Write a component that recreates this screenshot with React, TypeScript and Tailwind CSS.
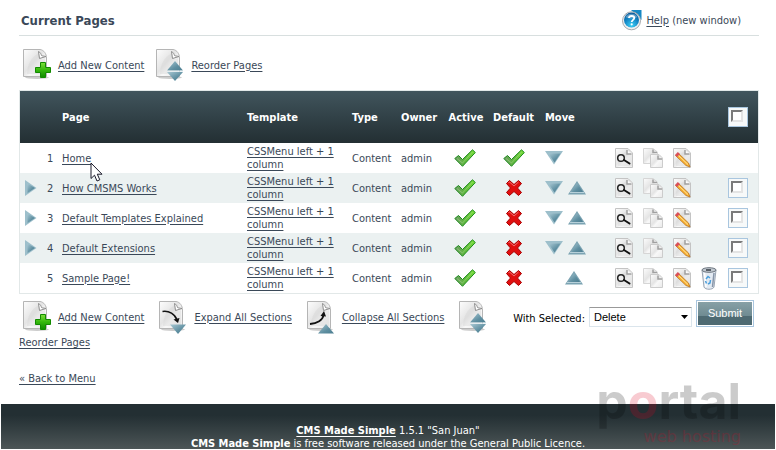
import type { ReactNode } from 'react'

interface PageRow {
  id: number
  title: string
  expandable: boolean
  isDefault: boolean
  canMoveDown: boolean
  canMoveUp: boolean
  canDelete: boolean
  selectable: boolean
}

const pages: PageRow[] = [
  { id: 1, title: 'Home', expandable: false, isDefault: true, canMoveDown: true, canMoveUp: false, canDelete: false, selectable: false },
  { id: 2, title: 'How CMSMS Works', expandable: true, isDefault: false, canMoveDown: true, canMoveUp: true, canDelete: false, selectable: true },
  { id: 3, title: 'Default Templates Explained', expandable: true, isDefault: false, canMoveDown: true, canMoveUp: true, canDelete: false, selectable: true },
  { id: 4, title: 'Default Extensions', expandable: true, isDefault: false, canMoveDown: true, canMoveUp: true, canDelete: false, selectable: true },
  { id: 5, title: 'Sample Page!', expandable: false, isDefault: false, canMoveDown: false, canMoveUp: true, canDelete: true, selectable: true },
]

// Gradients shared by all the icons
function IconDefs() {
  return (
    <svg width="0" height="0" className="absolute" aria-hidden="true">
      <defs>
        <linearGradient id="paper" x1="0" y1="0" x2="1" y2="1">
          <stop offset="0" stopColor="#fdfdfd" />
          <stop offset="0.45" stopColor="#e4e4e4" />
          <stop offset="0.6" stopColor="#f8f8f8" />
          <stop offset="1" stopColor="#e9e9e9" />
        </linearGradient>
        <linearGradient id="plus" x1="0" y1="0" x2="0" y2="1">
          <stop offset="0" stopColor="#7fe03c" />
          <stop offset="0.5" stopColor="#35b80c" />
          <stop offset="1" stopColor="#0f8a00" />
        </linearGradient>
        <linearGradient id="steel" x1="0" y1="0" x2="1" y2="1">
          <stop offset="0" stopColor="#a9c8d3" />
          <stop offset="0.6" stopColor="#5f8fa1" />
          <stop offset="1" stopColor="#4b7d90" />
        </linearGradient>
        <linearGradient id="tick" x1="0" y1="0" x2="1" y2="0">
          <stop offset="0" stopColor="#6f9a68" />
          <stop offset="0.5" stopColor="#5fb83c" />
          <stop offset="1" stopColor="#7be03a" />
        </linearGradient>
        <radialGradient id="globe" cx="0.5" cy="0.85" r="0.8">
          <stop offset="0" stopColor="#3fd0f5" />
          <stop offset="0.6" stopColor="#1184c4" />
          <stop offset="1" stopColor="#0b5c9c" />
        </radialGradient>
      </defs>
    </svg>
  )
}

function Sheet({ children }: { children?: ReactNode }) {
  return (
    <svg width="30" height="34" viewBox="0 0 30 34" className="shrink-0" aria-hidden="true">
      <ellipse cx="14" cy="29.500" rx="12" ry="1.500" fill="#000" opacity="0.2" />
      <path d="M0.500 1.500H17C21 2 23.500 6 23.500 10V28.500H0.500Z" fill="url(#paper)" stroke="#b5b5b5" />
      <path d="M4 26C4 17 8 9 16 5L18 11L22 10V26Z" fill="#d5d5d5" opacity="0.4" />
      <path d="M15.500 3.500L16.500 10.500L23 8.500C21 8 19 8 18.500 7.500C18 6 17.500 4.500 15.500 3.500Z" fill="#fff" stroke="#8d8d8d" />
      {children}
    </svg>
  )
}

function AddIcon() {
  return (
    <Sheet>
      <path d="M17.500 14.500H22.500V19.500H27.500V24.500H22.500V29.500H17.500V24.500H12.500V19.500H17.500Z" fill="url(#plus)" stroke="#128a00" />
    </Sheet>
  )
}

function ReorderIcon() {
  return (
    <Sheet>
      <path d="M19 13L27 22.500H11Z" fill="url(#steel)" />
      <path d="M11 24H27L19 33Z" fill="url(#steel)" />
      <path d="M11 23.200H27" stroke="#e5f0f4" />
    </Sheet>
  )
}

function ExpandIcon() {
  return (
    <Sheet>
      <path d="M3.500 11.500C10 10.500 16 14 18 20" fill="none" stroke="#111" strokeWidth="1.500" />
      <path d="M14.500 19.500L19 23L20.500 18Z" fill="#111" />
      <path d="M11 24.500H27L19 34Z" fill="url(#steel)" />
    </Sheet>
  )
}

function CollapseIcon() {
  return (
    <Sheet>
      <path d="M3 24C10 23.500 16 20 16.500 15" fill="none" stroke="#111" strokeWidth="1.800" />
      <path d="M13.500 16L17 11L19 16.500Z" fill="#111" />
      <path d="M19 24L27 33.500H11Z" fill="url(#steel)" />
    </Sheet>
  )
}

function HelpIcon() {
  return (
    <svg width="20" height="22" viewBox="0 0 20 22" aria-hidden="true">
      <path d="M9 1H19.500V11Z" fill="#1688c4" />
      <circle cx="9.500" cy="11.800" r="9" fill="#eef0f2" stroke="#a4a8ac" />
      <circle cx="9.500" cy="11" r="7.500" fill="url(#globe)" />
      <path d="M3.500 8C5 3.500 14 3.500 15.500 8C12 10 7 10 3.500 8Z" fill="#fff" opacity="0.3" />
      <path d="M7 9C7 6.300 12.300 6.300 12.300 9C12.300 10.800 9.700 11 9.700 13" fill="none" stroke="#fff" strokeWidth="1.800" />
      <circle cx="9.700" cy="15.300" r="1.100" fill="#fff" />
    </svg>
  )
}

function CheckIcon() {
  return (
    <svg width="22" height="18" viewBox="0 0 22 18" aria-hidden="true">
      <path d="M0.800 9.500L4.500 6.500L8.500 10.500L18.500 0.800L21.300 3.500L8.500 17.300Z" fill="url(#tick)" stroke="#1c8a1c" strokeLinejoin="round" />
      <path d="M3 9.500L8.500 14L18.500 3" fill="none" stroke="#b6e6a0" strokeWidth="0.700" opacity="0.600" />
    </svg>
  )
}

function CrossIcon() {
  return (
    <svg width="16" height="16" viewBox="0 0 16 16" aria-hidden="true">
      <path d="M3.500 0.500L8 4.500L12.500 0.500L15.500 3.500L11.500 8L15.500 12.500L12.500 15.500L8 11.500L3.500 15.500L0.500 12.500L4.500 8L0.500 3.500Z" fill="#e01010" stroke="#a80000" strokeLinejoin="round" />
      <path d="M2.500 3L3.500 2L8 6L12.500 2" fill="none" stroke="#f47070" />
    </svg>
  )
}

function DownIcon() {
  return (
    <svg width="18" height="14" viewBox="0 0 18 14" aria-hidden="true">
      <path d="M0 0H18L9 13.500Z" fill="#9dbfcb" />
      <path d="M3.500 2.500H15.500L9.500 11.500Z" fill="url(#steel)" />
    </svg>
  )
}

function UpIcon() {
  return (
    <svg width="18" height="14" viewBox="0 0 18 14" aria-hidden="true">
      <path d="M9 0L18 13.500H0Z" fill="#7ba3b2" />
      <path d="M9 2L15 11H3.500Z" fill="url(#steel)" />
      <path d="M2 11.500H16" stroke="#b8d1da" />
    </svg>
  )
}

function RightIcon() {
  return (
    <svg width="12" height="16" viewBox="0 0 12 16" aria-hidden="true">
      <path d="M0 0L11.500 8L0 16Z" fill="#9dbfcb" />
      <path d="M2.500 3.500L10 8L2.500 13Z" fill="url(#steel)" />
    </svg>
  )
}

function SmallSheet() {
  return (
    <>
      <path d="M0.500 0.500H13L17.500 5V19.500H0.500Z" fill="url(#paper)" stroke="#c4c4c4" />
      <path d="M3 15C4 9 7 5 12 3L17 6V18H3Z" fill="#ccc" opacity="0.3" />
      <path d="M12 2V6H16.500" fill="#fff" stroke="#a0a0a0" strokeWidth="1.500" />
    </>
  )
}

function ViewIcon() {
  return (
    <svg width="18" height="20" viewBox="0 0 18 20" aria-hidden="true">
      <SmallSheet />
      <circle cx="6" cy="10" r="3.300" fill="#eee" stroke="#222" strokeWidth="1.500" />
      <path d="M9 12L14.500 15.500" stroke="#111" strokeWidth="2" strokeLinecap="round" />
    </svg>
  )
}

function CopyIcon() {
  return (
    <svg width="20" height="20" viewBox="0 0 20 20" aria-hidden="true">
      <path d="M0.500 0.500H10L14.500 4V15.500H0.500Z" fill="url(#paper)" stroke="#d6d6d6" />
      <path d="M10 1.500V4.500H14" fill="none" stroke="#a0a0a0" strokeWidth="1.500" />
      <path d="M7.500 6.500H16L19.500 10V19.500H7.500Z" fill="url(#paper)" stroke="#ccc" />
      <path d="M15 7.500V11H19" fill="none" stroke="#a0a0a0" strokeWidth="1.500" />
    </svg>
  )
}

function EditIcon() {
  return (
    <svg width="18" height="20" viewBox="0 0 18 20" aria-hidden="true">
      <SmallSheet />
      <path d="M5 5L15.500 15L17 19L13 17.500L2.500 7.500Z" fill="#f9b233" stroke="#b8701a" strokeWidth="0.800" />
      <path d="M4.500 6.500L15 16.500" stroke="#ffe39a" />
      <path d="M2 7L4.800 4L7 6L4 9Z" fill="#d9505a" />
    </svg>
  )
}

function TrashIcon() {
  return (
    <svg width="16" height="23" viewBox="0 0 16 23" aria-hidden="true">
      <path d="M1 3L3 20C4 23 12 23 13 20L15 3Z" fill="#e3eaf2" stroke="#9aa5b3" />
      <path d="M3.500 6L5 20" stroke="#fff" strokeWidth="1.500" />
      <path d="M13 6L11.500 20" stroke="#8795a8" strokeWidth="1.500" />
      <ellipse cx="8" cy="3" rx="7" ry="2.300" fill="#c3cad1" stroke="#6a737d" />
      <path d="M5 3H10" stroke="#343b43" strokeWidth="1.500" />
      <path d="M5 12L7 9.500L9 11M9.500 13L9 16L7 17M4.500 14L5.500 16.500" fill="none" stroke="#4a9fdc" strokeWidth="1.500" />
    </svg>
  )
}

function Cursor() {
  return (
    <svg width="14" height="21" viewBox="0 0 14 21" className="absolute top-[10px] left-[28px] z-10" aria-hidden="true">
      <path d="M1 1V16.500L4.500 13.200L7 19L9.800 17.800L7.300 12.200H12Z" fill="#fff" stroke="#1a1a2a" />
    </svg>
  )
}

function SelectBox({ label }: { label: string }) {
  return (
    <label className="block size-5 border border-[#a9c6df] bg-[#f7f9f9] p-[2px]">
      <input
        type="checkbox"
        aria-label={label}
        className="block size-3 appearance-none border-2 border-t-[#7a7a7a] border-r-[#e4e4e4] border-b-[#e4e4e4] border-l-[#7a7a7a] bg-white checked:bg-[#52707a]"
      />
    </label>
  )
}

function IconButton({ label, children }: { label: string; children: ReactNode }) {
  return (
    <button type="button" aria-label={label} className="block">
      {children}
    </button>
  )
}

function IconLink({ icon, children }: { icon: ReactNode; children: ReactNode }) {
  return (
    <a href="#" className="flex items-center gap-[5px]">
      {icon}
      <span className="underline underline-offset-2">{children}</span>
    </a>
  )
}

export default function App() {
  return (
    <div className="bg-white font-['DejaVu_Sans_Condensed','Noto_Sans',sans-serif] text-[11px] leading-[13px] text-[#3a4858]">
      <IconDefs />

      <main className="pr-[17px] pl-[19px]">
        {/* Heading */}
        <header className="flex h-9 items-end justify-between border-b border-[#d8dfdf] pr-[18px] pb-1">
          <h1 className="pb-[2px] pl-[2px] text-[13px] leading-4 font-bold">Current Pages</h1>
          <div className="flex items-center gap-1">
            <HelpIcon />
            <p>
              <a href="#" className="underline underline-offset-2">Help</a> (new window)
            </p>
          </div>
        </header>

        <nav className="flex gap-3 px-1 pt-3 pb-2">
          <IconLink icon={<AddIcon />}>Add New Content</IconLink>
          <IconLink icon={<ReorderIcon />}>Reorder Pages</IconLink>
        </nav>

        {/* Page list */}
        <div className="border border-[#e2e8e8]">
          <table className="w-full table-fixed border-collapse">
            <colgroup>
              <col className="w-[22px]" />
              <col className="w-5" />
              <col />
              <col className="w-[105px]" />
              <col className="w-[49px]" />
              <col className="w-[43px]" />
              <col className="w-[44px]" />
              <col className="w-[51px]" />
              <col className="w-[70px]" />
              <col className="w-[29px]" />
              <col className="w-[30px]" />
              <col className="w-[29px]" />
              <col className="w-[25px]" />
              <col className="w-9" />
            </colgroup>
            <thead>
              <tr className="h-[52px] bg-linear-to-b from-[#41555d] to-[#232f33] text-left text-white">
                <th colSpan={2} />
                <th>Page</th>
                <th>Template</th>
                <th>Type</th>
                <th>Owner</th>
                <th className="text-center">Active</th>
                <th className="text-center">Default</th>
                <th className="pl-[6px]">Move</th>
                <th colSpan={4} />
                <th className="pl-[6px]"><SelectBox label="Select all pages" /></th>
              </tr>
            </thead>
            <tbody>
              {pages.map((page) => (
                <tr key={page.id} className="h-[30px] even:bg-[#ebf1f1]">
                  <td className="pl-[5px]">
                    {page.expandable && <IconButton label="Expand"><RightIcon /></IconButton>}
                  </td>
                  <td className="pl-[5px]">{page.id}</td>
                  <td>
                    <span className="relative">
                      <a href="#" className="underline underline-offset-2">{page.title}</a>
                      {page.id === 1 && <Cursor />}
                    </span>
                  </td>
                  <td className="pr-4">
                    <a href="#" className="underline underline-offset-2">CSSMenu left + 1 column</a>
                  </td>
                  <td>Content</td>
                  <td>admin</td>
                  <td className="pl-[10px]"><IconButton label="Active"><CheckIcon /></IconButton></td>
                  <td>
                    <div className="flex justify-center">
                      <IconButton label="Default">{page.isDefault ? <CheckIcon /> : <CrossIcon />}</IconButton>
                    </div>
                  </td>
                  <td className="px-[6px]">
                    <div className={`flex gap-[5px] ${page.canMoveDown ? '' : 'justify-center'}`}>
                      {page.canMoveDown && <IconButton label="Move down"><DownIcon /></IconButton>}
                      {page.canMoveUp && <IconButton label="Move up"><UpIcon /></IconButton>}
                    </div>
                  </td>
                  <td className="pl-[6px]"><IconButton label="View"><ViewIcon /></IconButton></td>
                  <td className="pl-[5px]"><IconButton label="Copy"><CopyIcon /></IconButton></td>
                  <td className="pl-[5px]"><IconButton label="Edit"><EditIcon /></IconButton></td>
                  <td className="pl-1">
                    {page.canDelete && <IconButton label="Delete"><TrashIcon /></IconButton>}
                  </td>
                  <td className="pl-[6px]">{page.selectable && <SelectBox label={`Select ${page.title}`} />}</td>
                </tr>
              ))}
            </tbody>
          </table>
        </div>

        {/* Bulk actions */}
        <div className="flex justify-between">
          <div>
            <div className="flex gap-[15px] px-1 pt-[6px]">
              <IconLink icon={<AddIcon />}>Add New Content</IconLink>
              <IconLink icon={<ExpandIcon />}>Expand All Sections</IconLink>
              <IconLink icon={<CollapseIcon />}>Collapse All Sections</IconLink>
              <a href="#" aria-label="Reorder Pages"><ReorderIcon /></a>
            </div>
            <p className="pt-[2px]">
              <a href="#" className="underline underline-offset-2">Reorder Pages</a>
            </p>
          </div>
          <form className="flex items-start gap-1 pt-[6px] pr-[5px]" onSubmit={(e) => e.preventDefault()}>
            <label htmlFor="bulk" className="pt-3 text-black">With Selected:</label>
            <span className="relative mt-[7px]">
              <select id="bulk" className="h-5 w-[103px] appearance-none border border-[#dbe5ec] border-t-[#999] bg-white pl-1 font-['Liberation_Sans',sans-serif] text-[11px] text-black">
                <option>Delete</option>
              </select>
              <svg width="7" height="4" viewBox="0 0 7 4" className="pointer-events-none absolute top-2 right-1" aria-hidden="true">
                <path d="M0 0H7L3.500 4Z" fill="#000" />
              </svg>
            </span>
            <button type="submit" className="h-[27px] w-[58px] border border-[#a9c6df] bg-white p-px font-['Liberation_Sans',sans-serif] text-white">
              <span className="block h-full bg-linear-to-b from-[#87a0a6] from-0% via-[#6f8b92] via-60% to-[#4e6a72] to-60% leading-[22px]">Submit</span>
            </button>
          </form>
        </div>

        <p className="pt-[23px] pb-[19px]">
          <a href="#" className="underline underline-offset-2">« Back to Menu</a>
        </p>
      </main>

      <footer className="relative mx-px h-[45px] bg-linear-to-b from-[#232f33] from-25% to-[#4d5657] pt-5 text-center text-white">
        <p><a href="#" className="font-bold underline underline-offset-2">CMS Made Simple</a> 1.5.1 "San Juan"</p>
        <p><a href="#" className="font-bold underline underline-offset-2">CMS Made Simple</a> is free software released under the General Public Licence.</p>
        {/* Host's watermark */}
        <div className="absolute right-[34px] bottom-1 text-right opacity-20">
          <p className="font-[Inter,sans-serif] text-[50px] leading-[56px] font-bold text-black">
            p<span className="text-[#e00020]">o</span>rtal
          </p>
          <p className="font-['DejaVu_Sans',sans-serif] text-[16px] leading-4 text-[#e00020]">web hosting</p>
        </div>
      </footer>
    </div>
  )
}
